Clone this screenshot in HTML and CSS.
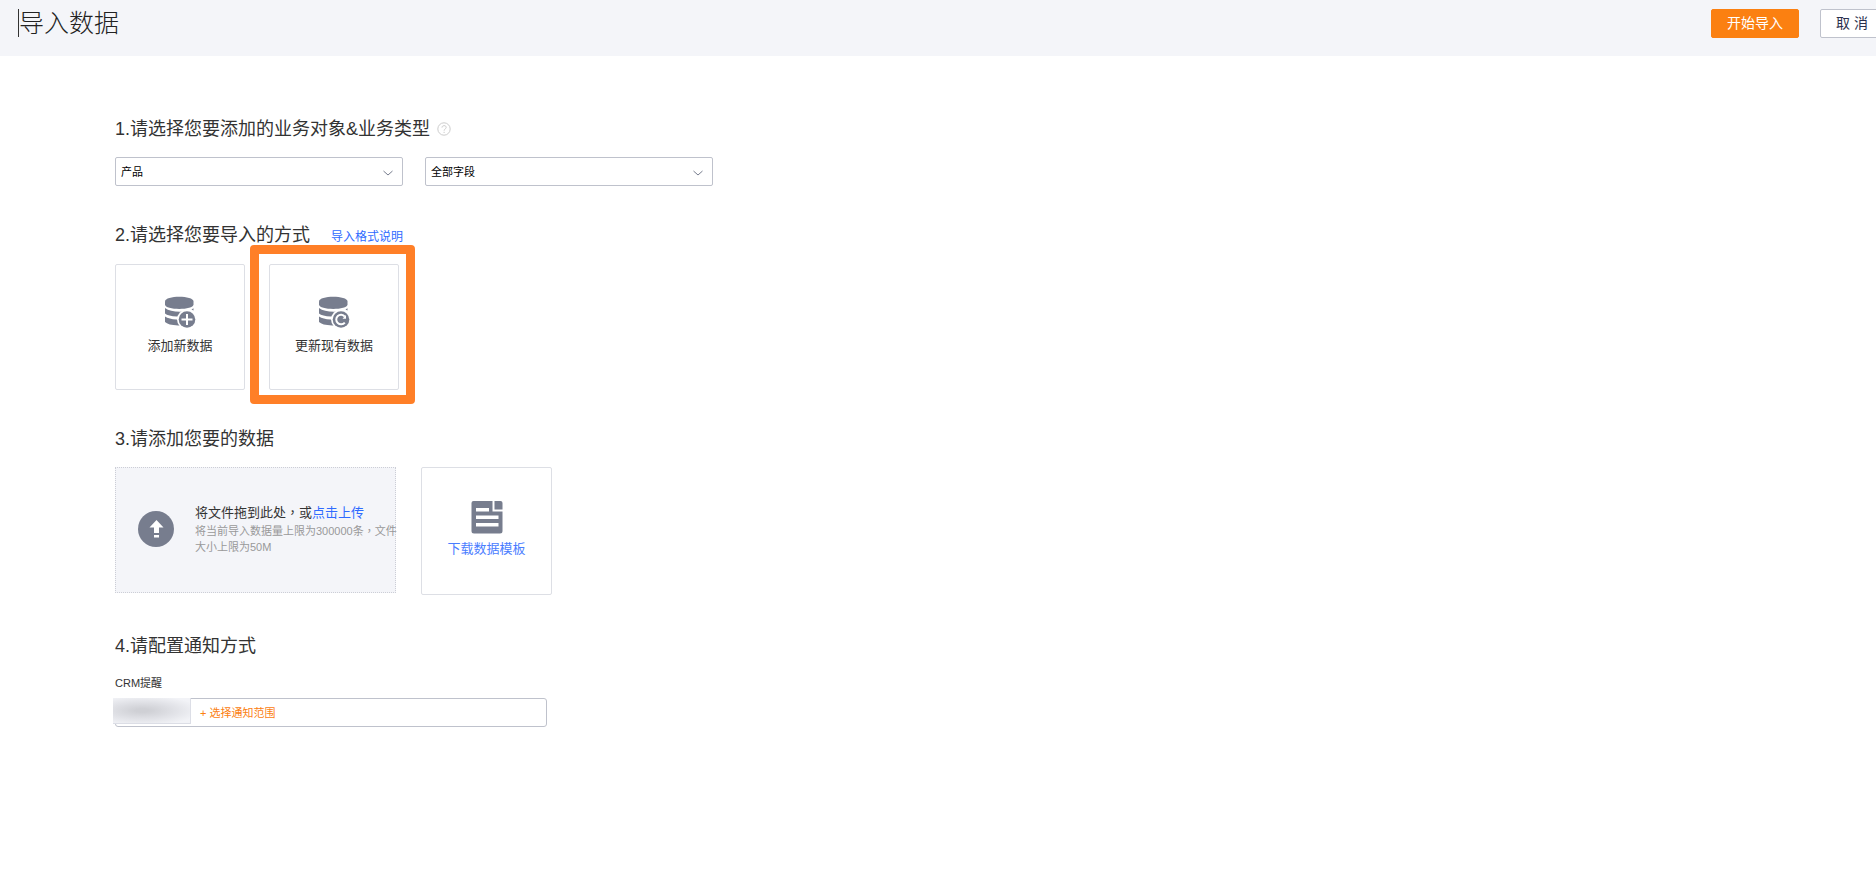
FILE: index.html
```html
<!DOCTYPE html>
<html lang="zh-CN">
<head>
    <meta charset="UTF-8">
    <title>导入数据</title>
    <link rel="stylesheet" href="styles.css">
</head>
<body>
<header class="topbar">
    <h1 class="title">导入数据</h1>
    <div class="actions">
        <button type="button" class="btn btn-primary">开始导入</button>
        <button type="button" class="btn btn-cancel">取 消</button>
    </div>
</header>
<main class="steps">
    <section class="step step-object">
        <div class="step-head">
            <h2>1.请选择您要添加的业务对象&amp;业务类型</h2>
            <svg class="help" width="14" height="14" viewBox="0 0 14 14">
                <circle cx="7" cy="7" r="6.2"/>
                <path d="M5 5.6C5 3 9.2 3 9.2 5.4C9.2 7 7.1 6.9 7.1 8.7M7.1 9.8V11"/>
            </svg>
        </div>
        <div class="selects">
            <div class="select-box">
                <select aria-label="业务对象"><option>产品</option></select>
                <svg class="arrow" width="12" height="8" viewBox="0 0 12 8"><path d="M1.5 2L6 6L10.5 2"/></svg>
            </div>
            <div class="select-box">
                <select aria-label="业务类型"><option>全部字段</option></select>
                <svg class="arrow" width="12" height="8" viewBox="0 0 12 8"><path d="M1.5 2L6 6L10.5 2"/></svg>
            </div>
        </div>
    </section>

    <section class="step step-mode">
        <div class="step-head">
            <h2>2.请选择您要导入的方式</h2>
            <a href="#" class="format-link">导入格式说明</a>
        </div>
        <div class="cards">
            <button type="button" class="card">
                <svg width="32" height="32" viewBox="0 0 32 32">
                    <path class="fill" d="M1 5.500C1 -.8 29.500 -.8 29.500 5.500V8.500C29.500 14.400 1 14.400 1 8.500Z"/>
                    <path class="fill" d="M1 12Q6 15.800 16 15.800H22V20.500H13Q4 20.200 1 17.500Z"/>
                    <path class="fill" d="M1 20.500Q5 23 12.500 23.500H18V29.500H14Q4 29 1 26Z"/>
                    <path class="fill" d="M27.500 13.500L29.500 12.300V14.500Z"/>
                    <circle class="white" cx="23" cy="23.500" r="10"/>
                    <circle class="fill" cx="23" cy="23.500" r="8.300"/>
                    <path class="line" d="M17.500 23.500H28.500M23 18V29"/>
                </svg>
                <span>添加新数据</span>
            </button>
            <button type="button" class="card marked">
                <svg width="32" height="32" viewBox="0 0 32 32">
                    <path class="fill" d="M1 5.500C1 -.8 29.500 -.8 29.500 5.500V8.500C29.500 14.400 1 14.400 1 8.500Z"/>
                    <path class="fill" d="M1 12Q6 15.800 16 15.800H22V20.500H13Q4 20.200 1 17.500Z"/>
                    <path class="fill" d="M1 20.500Q5 23 12.500 23.500H18V29.500H14Q4 29 1 26Z"/>
                    <path class="fill" d="M27.500 13.500L29.500 12.300V14.500Z"/>
                    <circle class="white" cx="23" cy="23.500" r="10"/>
                    <circle class="fill" cx="23" cy="23.500" r="8.300"/>
                    <path class="line" d="M26.800 26.500A4.800 4.800 0 1 1 26.800 20.500"/>
                    <path class="white" d="M28 19V22.800H24.500Z"/>
                </svg>
                <span>更新现有数据</span>
            </button>
        </div>
    </section>

    <section class="step step-file">
        <div class="step-head">
            <h2>3.请添加您要的数据</h2>
        </div>
        <div class="files">
            <div class="dropzone">
                <svg width="36" height="36" viewBox="0 0 36 36">
                    <circle class="fill" cx="18" cy="18" r="18"/>
                    <path class="white" d="M18.500 9L25.500 16.500H21V22H16V16.500H11.500ZM16 24H21V26.500H16Z"/>
                </svg>
                <div class="drop-text">
                    <p class="drop-main">将文件拖到此处<span class="comma" lang="zh-TW">，</span>或<a href="#">点击上传</a></p>
                    <p class="drop-note">将当前导入数据量上限为300000条<span class="comma" lang="zh-TW">，</span>文件<br>大小上限为50M</p>
                </div>
            </div>
            <a href="#" class="template">
                <svg width="32" height="34" viewBox="0 0 32 34">
                    <path class="fill" d="M2.500 1H21.500V11.500H31.500V31Q31.500 33.500 29 33.500H3Q.5 33.500 .5 31V3Q.5 1 2.500 1Z"/>
                    <path class="fill" d="M23.500 1H29.500Q31.500 1 31.500 3V9.500H23.500Z"/>
                    <path class="white" d="M5 8H18V11.500H5ZM5 15.500H27.500V19H5ZM5 23H27.500V26.500H5Z"/>
                </svg>
                <span>下载数据模板</span>
            </a>
        </div>
    </section>

    <section class="step step-notify">
        <div class="step-head">
            <h2>4.请配置通知方式</h2>
        </div>
        <h3 class="notify-label">CRM提醒</h3>
        <div class="notify-box">
            <span class="person"></span>
            <button type="button" class="add-range">+ 选择通知范围</button>
        </div>
    </section>
</main>
</body>
</html>
```
FILE: styles.css
```css
*{
    margin: 0;
    padding: 0;
    box-sizing: border-box;
}
body{
    background: #fff;
    color: #333;
    font-family: "Liberation Sans", "Noto Sans CJK SC", sans-serif;
}
a{
    color: #2f6bff;
    text-decoration: none;
}
button, select{
    font: inherit;
    color: inherit;
    cursor: pointer;
}
svg{
    display: block;
    flex: none;
}
.fill{
    fill: #777d8e;
}
.white{
    fill: #fff;
}
.line{
    fill: none;
    stroke: #fff;
    stroke-width: 2;
}
/* 居中的逗号 */
.comma{
    font-family: "Noto Sans CJK TC", sans-serif;
    line-height: 1;
}

/* 顶部 */
.topbar{
    display: flex;
    justify-content: space-between;
    align-items: flex-start;
    height: 56px;
    padding: 9px 0 0 18px;
    background: #f4f5f9;
    overflow: hidden;
}
.title{
    border-left: 1px solid #333;
    color: #222;
    font-size: 25px;
    font-weight: 300;
    line-height: 28px;
}
.actions{
    display: flex;
    gap: 21px;
    margin-right: -8px;
}
.btn{
    height: 29px;
    padding-bottom: 2px;
    border-radius: 2px;
    font-size: 14px;
    line-height: 24px;
}
.btn-primary{
    width: 88px;
    border: 1px solid #fb8011;
    background: #fb8011;
    color: #fff;
}
.btn-cancel{
    width: 64px;
    border: 1px solid #bfc2cc;
    background: #fff;
    color: #2a304d;
}

/* 步骤 */
.steps{
    padding: 59px 0 40px 115px;
}
.step-head{
    display: flex;
    align-items: center;
    height: 28px;
}
.step-head h2{
    font-size: 18px;
    font-weight: 400;
    line-height: 28px;
}
.step-object{
    margin-bottom: 35px;
}
.step-mode{
    margin-bottom: 35px;
}
.step-file{
    margin-bottom: 37px;
}
.help{
    margin-left: 7px;
    fill: none;
    stroke: #ccc;
}
.selects{
    display: flex;
    gap: 22px;
    margin-top: 14px;
}
.select-box{
    position: relative;
    width: 288px;
}
.select-box select{
    display: block;
    width: 100%;
    height: 29px;
    padding: 0 24px 0 5px;
    border: 1px solid #bfc2cc;
    border-radius: 2px;
    background: #fff;
    color: #000;
    font-size: 11px;
    appearance: none;
}
.arrow{
    position: absolute;
    right: 9px;
    top: 12px;
    fill: none;
    stroke: #777d8e;
    pointer-events: none;
}
.format-link{
    margin-left: 21px;
    font-size: 12px;
}
.cards{
    display: flex;
    gap: 24px;
    margin-top: 15px;
}
.card, .template{
    display: flex;
    flex-direction: column;
    align-items: center;
    border: 1px solid #dddfe5;
    border-radius: 2px;
    background: #fff;
    font-size: 13px;
    line-height: 20px;
}
.card{
    position: relative;
    width: 130px;
    height: 126px;
    padding-top: 31px;
    gap: 8px;
}
.marked::after{
    content: "";
    position: absolute;
    top: -20px;
    right: -17px;
    bottom: -15px;
    left: -20px;
    border: 9px solid #ff7f27;
    border-radius: 4px;
}

/* 上传 */
.files{
    display: flex;
    align-items: flex-start;
    gap: 25px;
    margin-top: 14px;
}
.dropzone{
    display: flex;
    align-items: center;
    width: 281px;
    height: 126px;
    padding: 0 0 2px 22px;
    gap: 21px;
    border: 1px dotted #ccced6;
    background: #f4f5f9;
}
.drop-text{
    white-space: nowrap;
}
.drop-main{
    font-size: 13px;
    line-height: 20px;
}
.drop-note{
    color: #999;
    font-size: 11px;
    line-height: 16px;
}
.template{
    width: 131px;
    height: 128px;
    padding-top: 32px;
    gap: 5px;
    color: #4a7dff;
}

/* 通知 */
.notify-label{
    margin-top: 15px;
    font-size: 11px;
    font-weight: 400;
    line-height: 16px;
}
.notify-box{
    position: relative;
    display: flex;
    width: 432px;
    height: 29px;
    margin-top: 7px;
    padding: 0 0 2px 84px;
    border: 1px solid #bfc2cc;
    border-radius: 3px;
}
.person{
    position: absolute;
    left: -3px;
    top: -1px;
    width: 78px;
    height: 26px;
    border-right: 1px solid #dcdee6;
    border-bottom: 1px solid #dcdee6;
    background: radial-gradient(ellipse at 38% 50%, #cfd0d5 10%, #dfe0e5 45%, #f2f3f7 85%);
}
.add-range{
    border: 0;
    background: none;
    color: #fb8011;
    font-size: 11px;
}
```
